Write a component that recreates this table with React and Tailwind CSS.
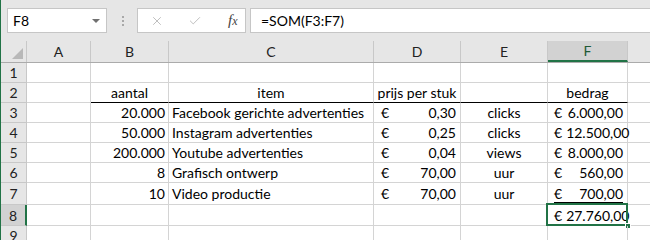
import { X, Check } from 'lucide-react';

// column widths: row header, A..F (G takes what is left)
const colW = ['w-[26px]', 'w-[64px]', 'w-[78px]', 'w-[205px]', 'w-[87px]', 'w-[87px]', 'w-[80px]'];
const letters = ['A', 'B', 'C', 'D', 'E', 'F'];

const rows = [
    { n: 1, h: 'h-[20px]', cells: [null, null, null, null, null, null] },
    {
        n: 2, h: 'h-[20px]', line: true,
        cells: [null, { t: 'aantal', a: 'c' }, { t: 'item', a: 'c' }, { t: 'prijs per stuk', a: 'c' }, null, { t: 'bedrag', a: 'c' }],
    },
    {
        n: 3, h: 'h-[20px]',
        cells: [null, { t: '20.000', a: 'r' }, { t: 'Facebook gerichte advertenties' }, { eur: '0,30' }, { t: 'clicks', a: 'c' }, { eur: '6.000,00', f: true }],
    },
    {
        n: 4, h: 'h-[20px]',
        cells: [null, { t: '50.000', a: 'r' }, { t: 'Instagram advertenties' }, { eur: '0,25' }, { t: 'clicks', a: 'c' }, { eur: '12.500,00', f: true }],
    },
    {
        n: 5, h: 'h-[20px]',
        cells: [null, { t: '200.000', a: 'r' }, { t: 'Youtube advertenties' }, { eur: '0,04' }, { t: 'views', a: 'c' }, { eur: '8.000,00', f: true }],
    },
    {
        n: 6, h: 'h-[20px]',
        cells: [null, { t: '8', a: 'r' }, { t: 'Grafisch ontwerp' }, { eur: '70,00' }, { t: 'uur', a: 'c' }, { eur: '560,00', f: true }],
    },
    {
        n: 7, h: 'h-[22px]',
        cells: [null, { t: '10', a: 'r' }, { t: 'Video productie' }, { eur: '70,00' }, { t: 'uur', a: 'c' }, { eur: '700,00', f: true, u: true }],
    },
    { n: 8, h: 'h-[21px]', sel: true, cells: [null, null, null, null, null, { eur: '27.760,00', f: true }] },
    { n: 9, h: 'h-[20px]', cells: [null, null, null, null, null, null] },
];

const CellBody = ({ c }) => {
    if (!c) return null;
    if (c.eur) {
        return (
            <div className={`flex w-full justify-between ${c.f ? 'pl-[6px] pr-[4px]' : 'pl-[7px] pr-[4px]'}`}>
                <div className={`flex w-full justify-between gap-[4px] ${c.u ? 'border-b border-black leading-[17px]' : ''}`}>
                    <span>€</span>
                    <span>{c.eur}</span>
                </div>
            </div>
        );
    }
    if (c.a === 'r') return <div className="w-full pr-[3px] text-right">{c.t}</div>;
    if (c.a === 'c') return <div className="w-full text-center whitespace-nowrap">{c.t}</div>;
    return <div className="pl-[3px] whitespace-nowrap">{c.t}</div>;
};

const FxIcon = () => (
    <span className="font-['Liberation_Serif',serif] text-[15px] italic text-[#444]">
        f<span className="text-[12px]">x</span>
    </span>
);

export default function App() {
    return (
        <div className="flex h-[240px] w-[650px] overflow-hidden bg-white font-['Lato',sans-serif] text-[14px] text-black">
            <div className="w-[1px] shrink-0 bg-[#217346]" />
            <div className="flex min-w-0 flex-1 flex-col">
                {/* formula bar */}
                <div className="flex h-[41px] shrink-0 items-start bg-[#e6e6e6] pt-[8px]">
                    <div className="ml-[6px] flex h-[25px] w-[100px] items-center justify-between border border-[#c6c6c6] bg-white pl-[5px] pr-[6px]">
                        <span>F8</span>
                        <span className="h-0 w-0 border-x-[4px] border-t-[4px] border-x-transparent border-t-[#707070]" />
                    </div>
                    <div className="ml-[15px] flex h-[25px] flex-col justify-center gap-[2px]">
                        <span className="h-[2px] w-[2px] bg-[#a8a8a8]" />
                        <span className="h-[2px] w-[2px] bg-[#a8a8a8]" />
                        <span className="h-[2px] w-[2px] bg-[#a8a8a8]" />
                    </div>
                    <div className="ml-[13px] flex h-[25px] w-[109px] items-center border border-[#c6c6c6] bg-white">
                        <X size={14} strokeWidth={1.4} className="ml-[12px] text-[#b0b0b0]" />
                        <Check size={14} strokeWidth={1.4} className="ml-[24px] text-[#b0b0b0]" />
                        <span className="ml-[26px]"><FxIcon /></span>
                    </div>
                    <div className="ml-[4px] flex h-[25px] flex-1 items-center border-y border-l border-[#c6c6c6] bg-white pl-[10px]">
                        =SOM(F3:F7)
                    </div>
                </div>

                {/* column headers */}
                <div className="flex h-[22px] shrink-0 border-b border-[#ababab] bg-[#e6e6e6] text-[#222]">
                    <div className={`${colW[0]} relative shrink-0 border-r border-[#c8c8c8]`}>
                        <span className="absolute bottom-[3px] right-[3px] h-0 w-0 border-b-[11px] border-l-[11px] border-b-[#b8b8b8] border-l-transparent" />
                    </div>
                    {letters.map((l, i) => (
                        <div
                            key={l}
                            className={`${colW[i + 1]} flex shrink-0 items-center justify-center border-r border-[#c8c8c8] ${l === 'F' ? 'border-b-2 border-b-[#217346] bg-[#d2d2d2] text-[#1e5a36]' : ''}`}
                        >
                            {l}
                        </div>
                    ))}
                    <div className="flex-1" />
                </div>

                {/* grid */}
                {rows.map(r => (
                    <div key={r.n} className={`flex ${r.h} shrink-0`}>
                        <div
                            className={`${colW[0]} flex shrink-0 items-center justify-center border-b border-r border-[#c8c8c8] text-[#222] ${r.sel ? 'border-r-2 border-r-[#217346] bg-[#d2d2d2]' : 'bg-[#e6e6e6]'}`}
                        >
                            {r.n}
                        </div>
                        {r.cells.map((c, i) => (
                            <div
                                key={i}
                                className={`${colW[i + 1]} relative flex shrink-0 items-center border-r border-[#d4d4d4] ${r.line && i > 0 ? 'border-b border-b-black' : 'border-b border-b-[#d4d4d4]'}`}
                            >
                                <CellBody c={c} />
                                {r.sel && i === 5 && (
                                    <>
                                        <span className="pointer-events-none absolute -left-[2px] -top-[2px] bottom-[-1px] right-[-1px] border-2 border-[#217346]" />
                                        <span className="absolute -bottom-[4px] -right-[4px] h-[6px] w-[6px] border border-white bg-[#217346]" />
                                    </>
                                )}
                            </div>
                        ))}
                        <div className="flex-1 border-b border-[#d4d4d4]" />
                    </div>
                ))}
            </div>
        </div>
    );
}
